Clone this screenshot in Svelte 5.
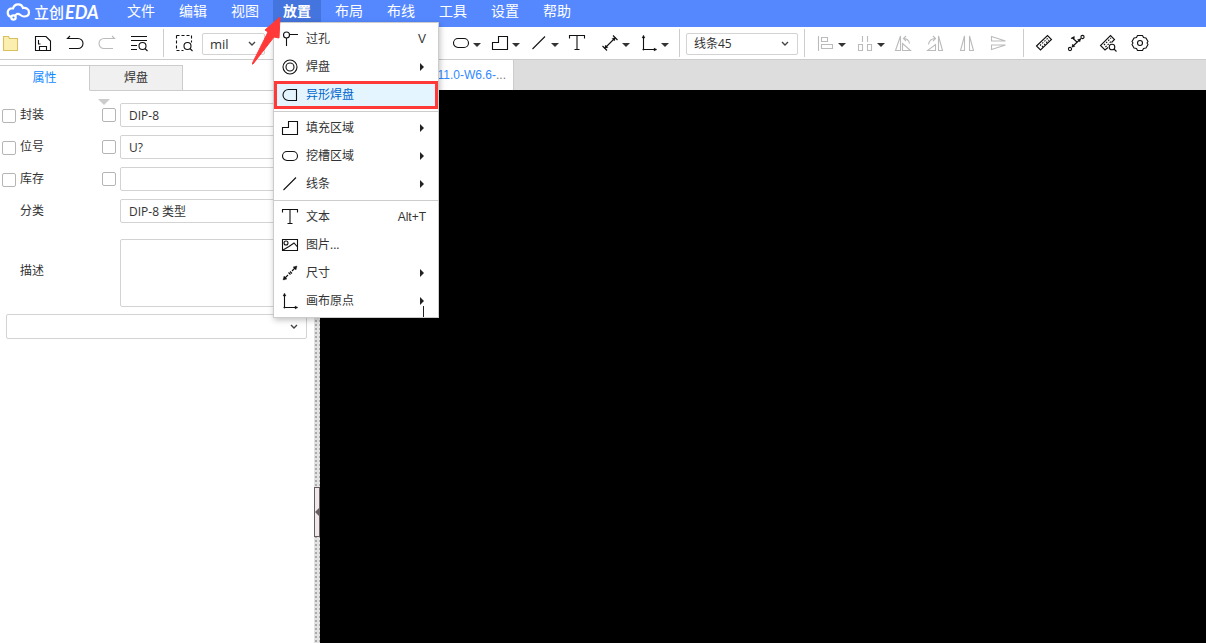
<script lang="ts">
  type Entry = { icon: string; label: string; key?: string; sub?: boolean; active?: boolean };

  const menus = ['文件', '编辑', '视图', '放置', '布局', '布线', '工具', '设置', '帮助'];

  const groups: Entry[][] = [
    [
      { icon: 'via', label: '过孔', key: 'V' },
      { icon: 'pad', label: '焊盘', sub: true },
      { icon: 'shaped', label: '异形焊盘', active: true },
    ],
    [
      { icon: 'region', label: '填充区域', sub: true },
      { icon: 'slot', label: '挖槽区域', sub: true },
      { icon: 'line', label: '线条', sub: true },
    ],
    [
      { icon: 'text', label: '文本', key: 'Alt+T' },
      { icon: 'image', label: '图片...' },
      { icon: 'measure', label: '尺寸', sub: true },
      { icon: 'origin', label: '画布原点', sub: true },
    ],
  ];

  const fields = [
    { id: 'package', label: '封装', value: 'DIP-8', check: true },
    { id: 'prefix', label: '位号', value: 'U?', check: true },
    { id: 'stock', label: '库存', value: '', check: true },
    { id: 'category', label: '分类', value: 'DIP-8 类型', check: false },
  ];
</script>

{#snippet icon(name: string)}
  <svg class="icon" viewBox="0 0 18 18" aria-hidden="true">
    {#if name === 'folder'}
      <path d="M1.500 2.500h5l1 2h8v12h-14z" fill="#fbefb0" stroke="#d8c060" />
    {:else if name === 'save'}
      <path d="M1.500 2.500h10.500l4.500 4.500v9.500h-15zM5.500 16.500v-4h7v4M4.500 6v4h2" />
    {:else if name === 'undo'}
      <path d="M4 2 1.500 4.500H12a5 5 0 0 1 0 10H3" />
    {:else if name === 'redo'}
      <path d="M14 2l2.500 2.500H6a5 5 0 0 0 0 10h9" />
    {:else if name === 'find'}
      <path d="M1 2.500h16M1 6.500h16M1 11.500h6M1 15.500h6M15 14.500l2.500 2.500" /><circle cx="12.500" cy="12" r="3.500" />
    {:else if name === 'select'}
      <path d="M1.500 1.500h15v7M1.500 1.500v15h7" stroke-dasharray="3 2" /><circle cx="12.500" cy="12" r="3.500" /><path d="m15 14.500 2.500 2.500" />
    {:else if name === 'via'}
      <circle cx="5.500" cy="5" r="3" /><path d="M8.500 4.500H17M5.500 8v8" />
    {:else if name === 'pad'}
      <circle cx="9" cy="9" r="7" /><circle cx="9" cy="9" r="4" />
    {:else if name === 'shaped'}
      <path d="M15.500 3.500H7.500a5.500 5.500 0 0 0 0 11h8z" />
    {:else if name === 'region'}
      <path d="M1.500 8.500h6v-6h9v13h-15z" />
    {:else if name === 'slot'}
      <rect x="1.500" y="4.500" width="15" height="9" rx="4.500" />
    {:else if name === 'line'}
      <path d="M2.500 15 15 2.500" />
    {:else if name === 'text'}
      <path d="M1.500 4.500v-3h15v3M9 1.500v14M6.500 15.500h5" />
    {:else if name === 'image'}
      <path d="M1.500 3.500h15v11h-15zM2 14l6-3.500 5-3.500 3.500 4" /><circle cx="5" cy="7" r="2" />
    {:else if name === 'dimension'}
      <path d="m3.500 14.500 11-11M12 1.500l4.500 4.500M1.500 12 6 16.500" /><path class="solid" d="m14.500 3.500-1 3.500-2.500-2.500zM3.500 14.500l3.500-1-2.500-2.500z" />
    {:else if name === 'measure'}
      <path d="m3 15 4-4m4-4 4-4M7.500 8.500l2 2M9 7.500l2 2" /><path class="solid" d="m16 2-1 4-3-3zM2 16l4-1-3-3z" />
    {:else if name === 'origin'}
      <path d="M3.500 3v12.500H15" /><path class="solid" d="m2 4 1.500-3L5 4zM14 14l3 1.500-3 1.500z" /><circle class="solid" cx="3.500" cy="15.500" r=".8" />
    {:else if name === 'align'}
      <path d="M1.500 2v15M4.500 3.500h6v4h-6zM4.500 10.500h11v4h-11z" />
    {:else if name === 'distribute'}
      <path d="M6.500 2v6M11.500 2v6M2.500 10.500h4v6h-4zM11.500 10.500h4v6h-4z" />
    {:else if name === 'rotate-left'}
      <path d="M6.500 2v14.500h-5zM8.500 9.500v7h8zM9.500 4.500q5 0 6 5M12 2 9.500 4.500 12 7" />
    {:else if name === 'rotate-right'}
      <path d="M12.500 2v14.500h4zM9.500 10.500v6h-8zM9.500 4.500q-6 0-7 6M7 2l2.500 2.500L7 7" />
    {:else if name === 'flip-h'}
      <path d="M6.500 2v14.500h-4zM11.500 2v14.500h4z" />
    {:else if name === 'flip-v'}
      <path d="M1.500 2.500v4.500h14zM1.500 15.500V11h14z" />
    {:else if name === 'ruler'}
      <path d="m1.500 12 11-10.500 4 4-11 10.500z" /><path d="m5 11.500 8-7.500M7 13l7-7" stroke-dasharray="1.500 1.500" />
    {:else if name === 'ruler-find'}
      <path d="M9 13.500 6 16l-4.500-4.500 10-10 4 4-3 3" /><path d="m5 11 7-7M6.500 13l6-6" stroke-dasharray="1.500 1.500" />
      <circle cx="13" cy="13" r="2.800" /><path d="m15 15 2.500 2.500" />
    {:else if name === 'net'}
      <circle cx="3" cy="15" r="1.600" /><circle cx="15.500" cy="3" r="1.600" />
      <path d="m5 13 9-8.500M4 4.500l3-1.500v3M5.500 4l5 4.500" /><path class="solid" d="m5 13 .5-3 2.500 2.500zM13.500 5l-.5 3-2.500-2.500z" />
    {:else if name === 'gear'}
      <path d="M6.500 1.500h5l1 2 2.500.5 2 3.500-1 1.500 1 1.500-2 3.500-2.500.5-1 2h-5l-1-2-2.500-.5L1 10.500 2 9 1 7.500 3 4l2.500-.5z" stroke-linejoin="round" /><circle cx="9" cy="9" r="2.500" />
    {/if}
  </svg>
{/snippet}

{#snippet tool(name: string, label: string, disabled = false)}
  <button class="tool" aria-label={label} {disabled}>{@render icon(name)}</button>
{/snippet}

{#snippet dropTool(name: string, label: string, muted = false)}
  <button class="tool drop" class:muted aria-label={label}>
    {@render icon(name)}
    <span class="caret"></span>
  </button>
{/snippet}

{#snippet chevron()}
  <svg class="chevron" viewBox="0 0 8 6" aria-hidden="true"><path d="m1 1 3 3 3-3" /></svg>
{/snippet}

<div class="app">
  <header class="menubar">
    <a class="logo" href="/" aria-label="立创EDA">
      <svg viewBox="0 0 26 20" aria-hidden="true">
        <path d="M6 15a4.500 4.500 0 0 1-.5-8.500H8C9.500 1 16.500 1 18 6c3.500-.5 6 1.500 6 4.200 0 3-2.500 4.300-5 4.300-3.500 0-4-3.500-7-2.500L9.500 14" />
        <circle cx="8.500" cy="15.500" r="2.200" />
      </svg>
      <span>立创</span><em>EDA</em>
    </a>
    <nav>
      {#each menus as name}
        <div class="menu">
          <button class:open={name === '放置'}>{name}</button>
          {#if name === '放置'}
            <div class="dropdown">
              {#each groups as group}
                <div class="group">
                  {#each group as entry}
                    <button class="entry" class:active={entry.active}>
                      {@render icon(entry.icon)}
                      <span>{entry.label}</span>
                      {#if entry.key}<kbd>{entry.key}</kbd>{/if}
                      {#if entry.sub}<i class="more"></i>{/if}
                    </button>
                  {/each}
                </div>
              {/each}
              <span class="text-cursor"></span>
            </div>
            <svg class="pointer" viewBox="0 0 30 48" aria-hidden="true">
              <path d="M28 0 13 13l3 2L0 47l1 0 21-27 5 1z" />
            </svg>
          {/if}
        </div>
      {/each}
    </nav>
  </header>

  <div class="toolbar">
    {@render tool('folder', '打开')}
    {@render tool('save', '保存')}
    {@render tool('undo', '撤销')}
    {@render tool('redo', '重做', true)}
    {@render tool('find', '查找')}
    <span class="sep"></span>
    <button class="tool snug" aria-label="框选">{@render icon('select')}</button>
    <div class="picker unit">
      <select aria-label="单位"><option>mil</option></select>
      {@render chevron()}
    </div>
    <span class="spacer"></span>
    {@render dropTool('slot', '挖槽区域')}
    {@render dropTool('region', '填充区域')}
    {@render dropTool('line', '线条')}
    {@render tool('text', '文本')}
    {@render dropTool('dimension', '尺寸')}
    {@render dropTool('origin', '画布原点')}
    <span class="sep tight"></span>
    <div class="picker route">
      <select aria-label="布线拐角"><option>线条45</option></select>
      {@render chevron()}
    </div>
    <span class="sep"></span>
    {@render dropTool('align', '对齐', true)}
    {@render dropTool('distribute', '分布', true)}
    {@render tool('rotate-left', '左旋', true)}
    {@render tool('rotate-right', '右旋', true)}
    {@render tool('flip-h', '水平翻转', true)}
    {@render tool('flip-v', '垂直翻转', true)}
    <span class="sep"></span>
    {@render tool('ruler', '测量')}
    {@render tool('net', '网络')}
    {@render tool('ruler-find', '检查尺寸')}
    {@render tool('gear', '设置')}
  </div>

  <main>
    <aside>
      <div class="tabs">
        <button class="current">属性</button>
        <button>焊盘</button>
      </div>
      <form>
        <div class="sort"></div>
        {#each fields as field}
          <div class="row">
            {#if field.check}<input type="checkbox" class="lead" aria-label="选择{field.label}" />{/if}
            <label for={field.id}>{field.label}</label>
            {#if field.check}<input type="checkbox" aria-label="显示{field.label}" />{/if}
            <input type="text" id={field.id} value={field.value} />
          </div>
        {/each}
        <div class="row tall">
          <label for="description">描述</label>
          <textarea id="description"></textarea>
        </div>
        <div class="picker extra">
          <select aria-label="更多属性"><option></option></select>
          {@render chevron()}
        </div>
      </form>
    </aside>
    <div class="splitter"><button aria-label="收起面板"><i></i></button></div>
    <section class="workspace">
      <div class="documents">
        <button><span>11.0-W6.6-</span>...</button>
      </div>
      <div class="canvas"></div>
    </section>
  </main>
</div>

<style>
  :global(body) {
    margin: 0;
  }

  .app {
    display: flex;
    flex-direction: column;
    height: 100vh;
    overflow: hidden;
    background: #fff;
    color: #333;
    font: 12px/16px 'Open Sans', 'Noto Sans CJK SC', sans-serif;
  }

  .app * {
    box-sizing: border-box;
  }

  button,
  input,
  select,
  textarea {
    margin: 0;
    padding: 0;
    border: 0;
    background: none;
    color: inherit;
    font: inherit;
  }

  .icon {
    display: block;
    flex: none;
    width: 18px;
    height: 18px;
    fill: none;
    stroke: #111;
    stroke-width: 1.1;
  }

  .icon .solid {
    fill: #111;
    stroke-width: 0.3;
  }

  .menubar {
    display: flex;
    flex: none;
    height: 27px;
    background: #5588ff;
    color: #fff;
  }

  .logo {
    display: flex;
    align-items: center;
    flex: none;
    width: 117px;
    height: 23px;
    padding-left: 5px;
    color: #fff;
    font-size: 15px;
    font-weight: 500;
    text-decoration: none;
  }

  .logo svg {
    width: 26px;
    height: 20px;
    margin-right: 3px;
    fill: none;
    stroke: #fff;
    stroke-width: 2.2;
  }

  .logo em {
    margin-left: 1px;
    font-family: Lato, sans-serif;
    font-size: 18px;
    font-weight: 700;
  }

  nav {
    display: flex;
    gap: 4px;
  }

  .menu {
    position: relative;
  }

  .menu > button {
    display: block;
    width: 48px;
    height: 22px;
    font-size: 14px;
    line-height: 20px;
  }

  .menu > .open {
    background: #4474dd;
    font-weight: 700;
  }

  .dropdown {
    position: absolute;
    z-index: 2;
    top: 22px;
    left: 0;
    width: 166px;
    padding: 2px 0;
    border: 1px solid #ccc;
    background: #fff;
    box-shadow: 1px 2px 6px rgba(0, 0, 0, 0.25);
    color: #333;
  }

  .group + .group {
    margin-top: 2px;
    padding-top: 2px;
    border-top: 1px solid #ccc;
  }

  .entry {
    display: flex;
    align-items: center;
    gap: 7px;
    width: 100%;
    height: 28px;
    padding: 0 12px 0 7px;
    text-align: left;
  }

  .entry.active {
    background: #e5f5ff;
    color: #0066cc;
    outline: 3px solid #ff3838;
    outline-offset: -3px;
  }

  .entry kbd,
  .more {
    margin-left: auto;
  }

  .entry kbd {
    font: 12px/16px 'Liberation Sans', sans-serif;
  }

  .more {
    margin-right: 2px;
    border: 4px solid transparent;
    border-right: 0;
    border-left: 4px solid #222;
  }

  .text-cursor {
    position: absolute;
    right: 14px;
    bottom: 0;
    width: 1px;
    height: 11px;
    background: #222;
  }

  .pointer {
    position: absolute;
    z-index: 3;
    top: 17px;
    left: -21px;
    width: 30px;
    height: 48px;
    fill: #ff3838;
    stroke: #ff3838;
    stroke-linejoin: round;
    pointer-events: none;
  }

  .toolbar {
    display: flex;
    align-items: center;
    flex: none;
    height: 33px;
    padding-left: 3px;
    border-bottom: 1px solid #ccc;
  }

  .tool {
    display: flex;
    align-items: center;
    justify-content: center;
    flex: none;
    width: 16px;
    height: 28px;
    margin-right: 16px;
  }

  .tool.snug {
    margin-right: 10px;
  }

  .tool.drop {
    justify-content: flex-start;
    gap: 3px;
    width: 28px;
    margin-right: 11px;
  }

  .tool:disabled .icon,
  .muted .icon {
    stroke: #bbb;
  }

  .caret {
    margin-top: 3px;
    border: 4px solid transparent;
    border-top-color: #333;
    border-bottom: 0;
  }

  .sep {
    flex: none;
    width: 1px;
    height: 28px;
    margin-right: 12px;
    background: #ccc;
  }

  .sep.tight {
    margin-right: 6px;
  }

  .spacer {
    flex: 0 0 187px;
  }

  .picker {
    position: relative;
    flex: none;
    height: 22px;
  }

  .toolbar .picker {
    margin-top: 2px;
  }

  .picker select {
    appearance: none;
    width: 100%;
    height: 100%;
    padding: 0 7px;
    border: 1px solid #d3d3d3;
    border-radius: 2px;
    background: #fff;
  }

  .chevron {
    position: absolute;
    top: calc(50% - 3px);
    right: 9px;
    width: 8px;
    height: 6px;
    fill: none;
    stroke: #444;
    stroke-width: 1.4;
    pointer-events: none;
  }

  .unit {
    width: 63px;
    font-size: 13px;
  }

  .route {
    width: 112px;
    margin-right: 6px;
  }

  main {
    display: flex;
    flex: 1;
    min-height: 0;
  }

  aside {
    flex: 0 0 314px;
    padding-top: 5px;
  }

  .tabs {
    display: flex;
    height: 26px;
    border-bottom: 1px solid #ccc;
  }

  .tabs button {
    width: 93px;
    height: 26px;
    border: 1px solid #ccc;
    border-left: 0;
    background: #f0f0f0;
  }

  .tabs .current {
    width: 90px;
    border-bottom-color: #fff;
    background: #fff;
    color: #1188ff;
  }

  form {
    padding: 8px 7px 0 0;
  }

  .sort {
    width: 12px;
    margin: 0 0 -2px 98px;
    border: 6px solid transparent;
    border-top-color: #ccc;
    border-bottom: 0;
  }

  .row {
    display: grid;
    grid-template-columns: 20px 82px 18px 1fr;
    align-items: center;
    height: 24px;
    margin-bottom: 8px;
  }

  .row label {
    grid-column: 2;
  }

  .row input[type='checkbox'] {
    appearance: none;
    width: 14px;
    height: 14px;
    border: 1px solid #b5b5b5;
    border-radius: 2px;
    background: #fff;
  }

  .row .lead {
    margin: 2px 0 0 2px;
  }

  .row input[type='text'],
  textarea {
    grid-column: 4;
    width: 100%;
    height: 100%;
    padding: 0 8px;
    border: 1px solid #d3d3d3;
    border-radius: 2px;
    resize: none;
  }

  .row.tall {
    height: 68px;
    margin: 16px 0 7px;
  }

  .row.tall label {
    margin-bottom: 4px;
  }

  .extra {
    height: 25px;
    margin-left: 6px;
  }

  .splitter {
    flex: 0 0 6px;
    padding-top: calc(50vh + 105px);
    background: radial-gradient(circle at 1px 1px, #aaa 0 1px, transparent 1px) 1px 0 / 4px 4px #e2e2e2;
  }

  .splitter button {
    display: flex;
    align-items: center;
    justify-content: flex-end;
    width: 6px;
    height: 50px;
    border: 1px solid #665b5f;
    background: #eee8ea;
  }

  .splitter i {
    border: 4px solid transparent;
    border-right-color: #665b5f;
    border-left: 0;
  }

  .workspace {
    display: flex;
    flex: 1;
    flex-direction: column;
    min-width: 0;
  }

  .documents {
    display: flex;
    flex: none;
    height: 30px;
    background: #ddd;
  }

  .documents button {
    width: 194px;
    padding-right: 7px;
    border-right: 1px solid #ccc;
    background: #fff;
    color: #777;
    font-family: 'Liberation Sans', sans-serif;
    text-align: right;
  }

  .documents span {
    color: #3388ff;
  }

  .canvas {
    flex: 1;
    background: #000;
  }
</style>
